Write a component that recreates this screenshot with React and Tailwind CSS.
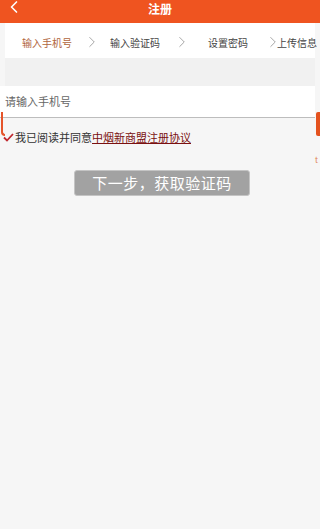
import { ChevronLeft, ChevronRight } from 'lucide-react';

const steps = ['输入手机号', '输入验证码', '设置密码'];

export default function App() {
  return (
    <div
      className="relative w-[320px] h-[529px] overflow-hidden bg-[#f6f6f6] text-[#333]"
      style={{ fontFamily: '"Noto Sans CJK SC", "Noto Sans", sans-serif' }}
    >
      {/* Header */}
      <div className="relative h-[23px] bg-[#ef5420] flex justify-center items-start">
        <ChevronLeft className="absolute left-[4px] -top-[3px] text-white" size={20} strokeWidth={2} />
        <span className="text-white text-[12px] font-bold leading-[17px]">注册</span>
      </div>

      {/* Steps */}
      <div className="mx-[5px] h-[35px] bg-white flex items-center text-[10px] text-[#444] pt-[3px] whitespace-nowrap">
        <span className="flex-none ml-[17px] text-[#b0643c]">{steps[0]}</span>
        <ChevronRight className="flex-none ml-[11px] text-[#888]" size={18} strokeWidth={1} />
        <span className="flex-none ml-[9px]">{steps[1]}</span>
        <ChevronRight className="flex-none ml-[13px] text-[#888]" size={18} strokeWidth={1} />
        <span className="flex-none ml-[17px]">{steps[2]}</span>
        <ChevronRight className="flex-none ml-[16px] text-[#888]" size={18} strokeWidth={1} />
        <span className="flex-none -ml-[5px]">上传信息</span>
      </div>

      {/* Gray spacer */}
      <div className="mx-[5px] h-[28px] bg-[#f1f1f1]" />

      {/* Phone input row */}
      <div className="h-[32px] bg-white border-b border-[#bdbdbd] mr-[5px] flex items-center pl-[5px] text-[11px] text-[#666]">
        请输入手机号
      </div>

      {/* Agreement */}
      <div className="flex items-center h-[22px] mt-[8px] pl-[3px] text-[11px]">
        <svg width="11" height="9" viewBox="0 0 11 9" className="mr-[1px]">
          <path d="M1 4.5 L4 7.5 L10 1" fill="none" stroke="#c0282e" strokeWidth="1.8" />
        </svg>
        <span className="text-[#333]">我已阅读并同意</span>
        <span className="text-[#7a1010] underline">中烟新商盟注册协议</span>
      </div>

      {/* Button */}
      <div className="flex mt-[22px] pl-[74px]">
        <div className="w-[176px] h-[26px] bg-[#a2a2a2] border border-[#c4c4c4] rounded-[3px] flex items-center justify-center text-white text-[15px] tracking-[0.5px]">
          下一步，获取验证码
        </div>
      </div>

      {/* Edge artifacts */}
      <div className="absolute left-[1px] top-[112px] w-[4px] h-[24px] border-l-2 border-b-2 border-[#e5542a] rounded-bl-[4px]" />
      <div className="absolute right-0 top-[112px] w-[4px] h-[24px] bg-[#e4521e] rounded-l-[2px]" />
      <div className="absolute right-[2px] top-[154px] text-[8px] text-[#e08050]">t</div>
    </div>
  );
}
